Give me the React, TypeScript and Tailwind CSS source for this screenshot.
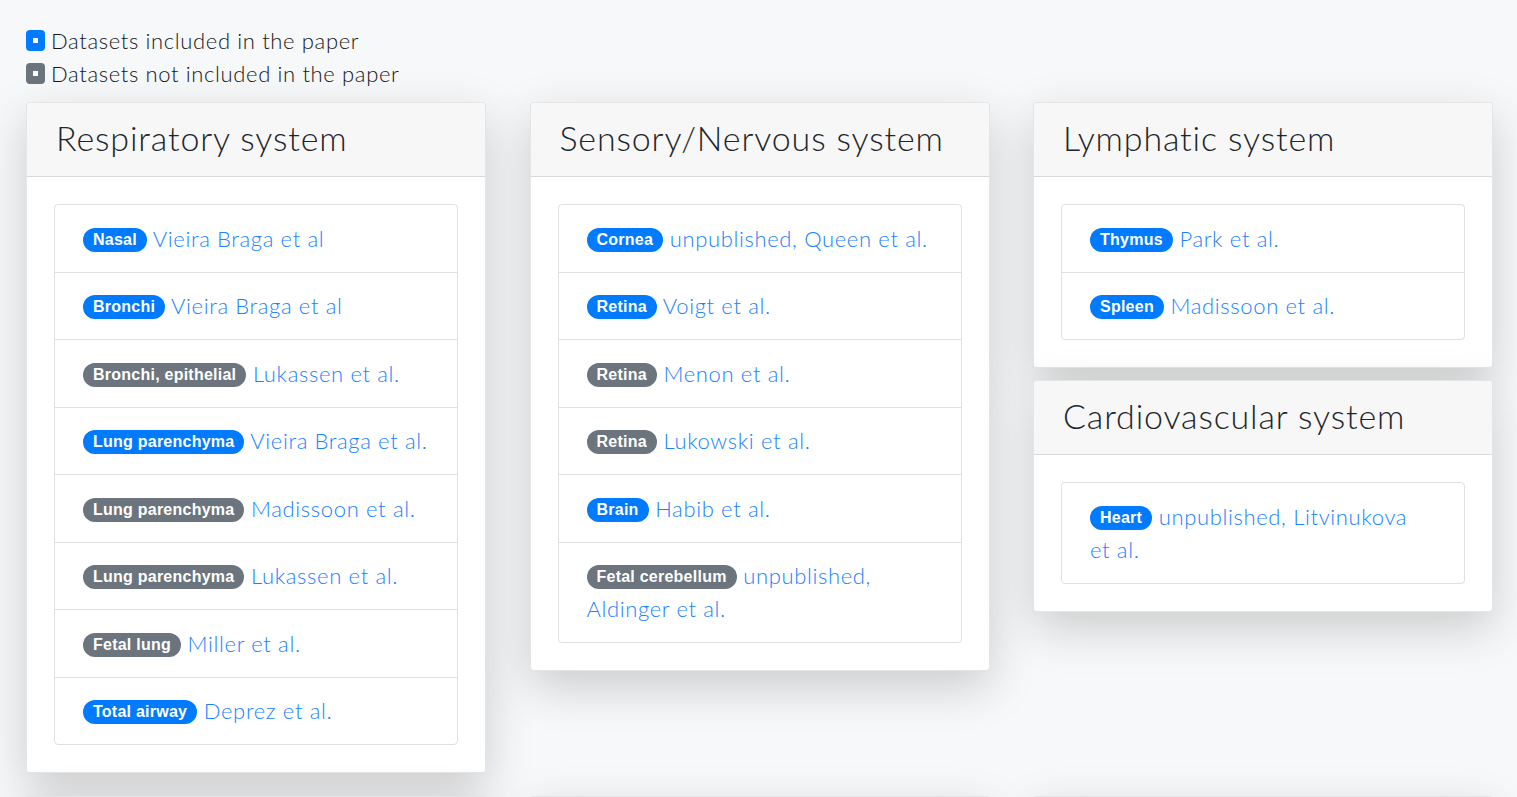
const included = "bg-[#007bff]";
const excluded = "bg-[#6c757d]";

type Entry = { tag: string; inPaper: boolean; ref: string };
type System = { title: string; entries: Entry[] };

const columns: System[][] = [
  [
    {
      title: "Respiratory system",
      entries: [
        { tag: "Nasal", inPaper: true, ref: "Vieira Braga et al" },
        { tag: "Bronchi", inPaper: true, ref: "Vieira Braga et al" },
        { tag: "Bronchi, epithelial", inPaper: false, ref: "Lukassen et al." },
        { tag: "Lung parenchyma", inPaper: true, ref: "Vieira Braga et al." },
        { tag: "Lung parenchyma", inPaper: false, ref: "Madissoon et al." },
        { tag: "Lung parenchyma", inPaper: false, ref: "Lukassen et al." },
        { tag: "Fetal lung", inPaper: false, ref: "Miller et al." },
        { tag: "Total airway", inPaper: true, ref: "Deprez et al." },
      ],
    },
  ],
  [
    {
      title: "Sensory/Nervous system",
      entries: [
        { tag: "Cornea", inPaper: true, ref: "unpublished, Queen et al." },
        { tag: "Retina", inPaper: true, ref: "Voigt et al." },
        { tag: "Retina", inPaper: false, ref: "Menon et al." },
        { tag: "Retina", inPaper: false, ref: "Lukowski et al." },
        { tag: "Brain", inPaper: true, ref: "Habib et al." },
        { tag: "Fetal cerebellum", inPaper: false, ref: "unpublished, Aldinger et al." },
      ],
    },
  ],
  [
    {
      title: "Lymphatic system",
      entries: [
        { tag: "Thymus", inPaper: true, ref: "Park et al." },
        { tag: "Spleen", inPaper: true, ref: "Madissoon et al." },
      ],
    },
    {
      title: "Cardiovascular system",
      entries: [{ tag: "Heart", inPaper: true, ref: "unpublished, Litvinukova et\u00a0al." }],
    },
  ],
];

const nextRow = ["Digestive system", "Reproductive system", "Urinary system"];

function Badge({ label, inPaper }: { label: string; inPaper: boolean }) {
  return (
    <span
      className={`inline-block rounded-full px-[10px] text-[16px] leading-[24px] font-bold tracking-[0.015em] text-white align-[2px] ${inPaper ? included : excluded}`}
      style={{ fontFamily: '"Liberation Sans", Arial, sans-serif' }}
    >
      {label}
    </span>
  );
}

function Card({ system }: { system: System }) {
  return (
    <div className="rounded-[4px] border border-black/10 bg-white shadow-[0_16px_48px_rgba(0,0,0,0.18)]">
      <div className="rounded-t-[4px] border-b border-black/12 bg-[#f7f7f7] px-[29px] pt-[13px] pb-[16px]">
        <h2 className="text-[34px] leading-[44px] tracking-[0.025em] text-[#212529]">{system.title}</h2>
      </div>
      <div className="p-[27px]">
        <ul className="rounded-[4px] border border-black/12">
          {system.entries.map((e, i) => (
            <li
              key={i}
              className="border-b border-black/12 px-[28px] py-[16.75px] text-[22px] leading-[33px] last:border-b-0"
            >
              <Badge label={e.tag} inPaper={e.inPaper} />{" "}
              <a href="#" className="text-[#1a82ff]">
                {e.ref}
              </a>
            </li>
          ))}
        </ul>
      </div>
    </div>
  );
}

export default function App() {
  return (
    <div
      className="min-h-screen bg-[#f7f8f9] pl-[26px] pr-[24px] pt-[24px] font-light tracking-[0.04em] text-[#212529]"
      style={{ fontFamily: 'Lato, "Open Sans", sans-serif' }}
    >
      {/* Legend */}
      <div className="pb-[12px] text-[22px] leading-[33px] text-[#16191c]">
        <div className="flex items-center gap-[6px]">
          <span className={`flex h-[21px] w-[19px] items-center justify-center rounded-[4px] ${included}`}>
            <span className="h-[5px] w-[5px] bg-white" />
          </span>
          Datasets included in the paper
        </div>
        <div className="flex items-center gap-[6px]">
          <span className={`flex h-[21px] w-[19px] items-center justify-center rounded-[4px] ${excluded}`}>
            <span className="h-[5px] w-[5px] bg-white" />
          </span>
          Datasets not included in the paper
        </div>
      </div>

      <div className="grid grid-cols-[460px_460px_460px] items-start gap-x-[43.5px]">
        {columns.map((col, ci) => (
          <div key={ci} className="flex flex-col gap-[12px]">
            {col.map((s) => (
              <Card key={s.title} system={s} />
            ))}
          </div>
        ))}
      </div>

      {/* Next row, starts just at the bottom edge */}
      <div className="mt-[23px] grid grid-cols-[460px_460px_460px] gap-x-[43.5px] pb-8">
        {nextRow.map((t) => (
          <Card key={t} system={{ title: t, entries: [] }} />
        ))}
      </div>
    </div>
  );
}
